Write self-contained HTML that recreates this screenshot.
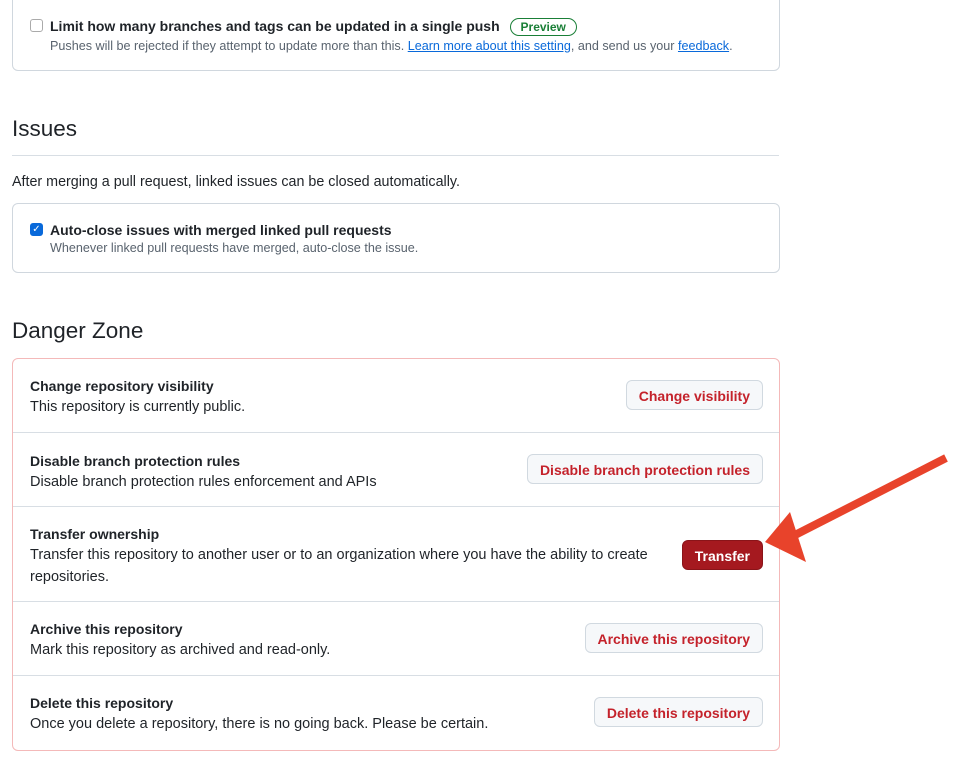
<!DOCTYPE html><html><head><style>
body{margin:0;width:962px;height:757px;background:#fff;font-family:"Liberation Sans",sans-serif;color:#1f2328;position:relative;overflow:hidden}
.a{position:absolute}
.card{position:absolute;left:12px;width:766px;border:1px solid #d0d7de;border-radius:6px}
.t{font-weight:bold;font-size:14px}
.s{font-size:12.6px;color:#59636e}
.cb{position:absolute;width:11px;height:11px;border:1px solid #aaa;border-radius:3px;background:#fff}
a{color:#0969da;text-decoration:underline}
.dz{position:absolute;left:12px;top:358px;width:766px;height:391px;border:1px solid #f4b9b9;border-radius:6px}
.row{position:absolute;left:0;width:766px;border-top:1px solid #d8dee4}
.row .t{position:absolute;left:17px}
.row .d{position:absolute;left:17px;font-size:14.5px;line-height:22px}
.btn{position:absolute;right:16px;height:30px;border:1px solid #d1d9e0;border-radius:6px;background:#f6f8fa;color:#c4222b;font-weight:bold;font-size:14px;line-height:30px;padding:0 12px;box-sizing:border-box}
</style></head><body>
<div class="card" style="top:-10px;height:79px">
<div class="cb" style="left:17px;top:28px"></div>
<div class="a t" style="left:37px;top:27px">Limit how many branches and tags can be updated in a single push <span style="display:inline-block;border:1px solid #1a7f37;color:#1a7f37;border-radius:12px;font-size:12px;padding:1px 10px;margin-left:6px">Preview</span></div>
<div class="a s" style="left:37px;top:48px">Pushes will be rejected if they attempt to update more than this. <a>Learn more about this setting</a>, and send us your <a>feedback</a>.</div>
</div>
<div class="a" style="left:12px;top:116px;font-size:22.5px">Issues</div>
<div class="a" style="left:12px;top:155px;width:767px;border-top:1px solid #d8dee4"></div>
<div class="a" style="left:12px;top:174px;font-size:14.3px">After merging a pull request, linked issues can be closed automatically.</div>
<div class="card" style="top:203px;height:68px">
<div class="cb" style="left:17px;top:19px;background:#0969da;border-color:#0969da;color:#fff;font-size:10px;line-height:11px;text-align:center">✓</div>
<div class="a t" style="left:37px;top:18px">Auto-close issues with merged linked pull requests</div>
<div class="a s" style="left:37px;top:37px">Whenever linked pull requests have merged, auto-close the issue.</div>
</div>
<div class="a" style="left:12px;top:318px;font-size:22.5px">Danger Zone</div>
<div class="dz">
<div class="row" style="top:0;height:74px;border:none"><div class="t" style="top:19px">Change repository visibility</div><div class="d" style="top:37px">This repository is currently public.</div><div class="btn" style="top:21px">Change visibility</div></div>
<div class="row" style="top:73px;height:74px"><div class="t" style="top:20px">Disable branch protection rules</div><div class="d" style="top:38px">Disable branch protection rules enforcement and APIs</div><div class="btn" style="top:21px">Disable branch protection rules</div></div>
<div class="row" style="top:147px;height:95px"><div class="t" style="top:19px">Transfer ownership</div><div class="d" style="top:37px;width:650px">Transfer this repository to another user or to an organization where you have the ability to create repositories.</div><div class="btn" style="top:33px;background:#a5191f;color:#fff;border-color:#8a1419">Transfer</div></div>
<div class="row" style="top:242px;height:74px"><div class="t" style="top:19px">Archive this repository</div><div class="d" style="top:37px">Mark this repository as archived and read-only.</div><div class="btn" style="top:21px">Archive this repository</div></div>
<div class="row" style="top:316px;height:74px"><div class="t" style="top:19px">Delete this repository</div><div class="d" style="top:37px">Once you delete a repository, there is no going back. Please be certain.</div><div class="btn" style="top:21px">Delete this repository</div></div>
</div>
<svg class="a" style="left:0;top:0" width="962" height="757"><line x1="946" y1="458" x2="795" y2="535" stroke="#e8432b" stroke-width="8"/><polygon points="765,542 790,512 806,562" fill="#e8432b"/></svg>
</body></html>
